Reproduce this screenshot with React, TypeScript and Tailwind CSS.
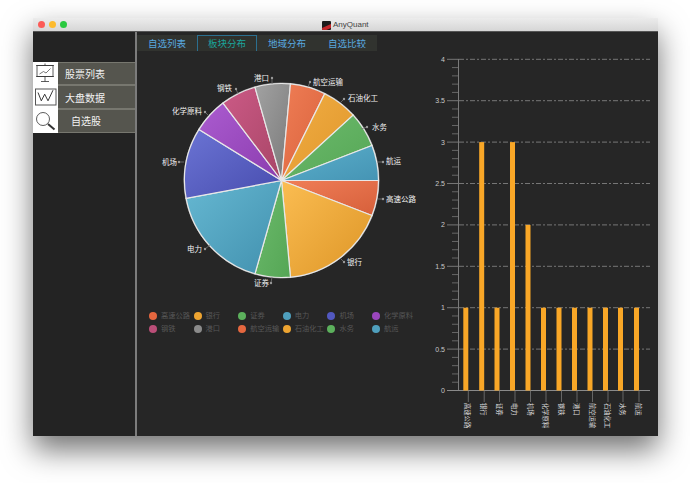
const font = { sans: "font-['Noto_Sans_CJK_SC','Noto_Sans',sans-serif]" };

const tabs = ['自选列表', '板块分布', '地域分布', '自选比较'];

// value is how many stocks fall in the sector; also used for the bars
const sectors = [
  { name: '高速公路', value: 1, from: '#f07e58', to: '#d65f3a', dot: '#e5673f', lx: 386, ly: 199, ax: 378, ay: 199, bx: 383, by: 199 },
  { name: '银行', value: 3, from: '#fbbd52', to: '#dd9526', dot: '#eda431', lx: 347, ly: 262, ax: 340, ay: 258, bx: 344, by: 262 },
  { name: '证券', value: 1, from: '#6dbb6d', to: '#55a655', dot: '#5cb05c', lx: 254, ly: 283, ax: 272, ay: 277, bx: 271, by: 283 },
  { name: '电力', value: 3, from: '#66b8d2', to: '#4190ae', dot: '#4f9fbd', lx: 187, ly: 249, ax: 210, ay: 245, bx: 205, by: 249 },
  { name: '机场', value: 2, from: '#6b74d4', to: '#474cae', dot: '#5258c0', lx: 162, ly: 162, ax: 184, ay: 162, bx: 179, by: 162 },
  { name: '化学原料', value: 1, from: '#ab5cd0', to: '#8b3cae', dot: '#9a46bc', lx: 172, ly: 111, ax: 209, ay: 116, bx: 205, by: 112 },
  { name: '钢铁', value: 1, from: '#cb5a86', to: '#a84566', dot: '#bb4e78', lx: 217, ly: 88, ax: 238, ay: 94, bx: 236, by: 89 },
  { name: '港口', value: 1, from: '#a2a2a2', to: '#797979', dot: '#8b8b8b', lx: 254, ly: 78, ax: 272, ay: 84, bx: 272, by: 78 },
  { name: '航空运输', value: 1, from: '#ef7d55', to: '#d9623c', dot: '#e5673f', lx: 313, ly: 82, ax: 308, ay: 87, bx: 310, by: 82 },
  { name: '石油化工', value: 1, from: '#f2ae45', to: '#df962a', dot: '#eda431', lx: 348, ly: 98, ax: 340, ay: 103, bx: 344, by: 99 },
  { name: '水务', value: 1, from: '#6dbb6d', to: '#55a655', dot: '#5cb05c', lx: 372, ly: 127, ax: 361, ay: 129, bx: 367, by: 127 },
  { name: '航运', value: 1, from: '#5cb0cc', to: '#4594b4', dot: '#4f9fbd', lx: 386, ly: 161, ax: 377, ay: 162, bx: 383, by: 162 },
];

const total = sectors.reduce((sum, s) => sum + s.value, 0);

function slicePath(cx: number, cy: number, r: number, start: number, end: number) {
  const x1 = cx + r * Math.cos(start);
  const y1 = cy + r * Math.sin(start);
  const x2 = cx + r * Math.cos(end);
  const y2 = cy + r * Math.sin(end);
  const large = end - start > Math.PI ? 1 : 0;
  return `M${cx} ${cy}L${x1} ${y1}A${r} ${r} 0 ${large} 1 ${x2} ${y2}Z`;
}

function PieChart() {
  let angle = 0;
  return (
    <svg width={292} height={250} viewBox="137 55 292 250" className="block">
      <defs>
        {sectors.map((s, i) => (
          <linearGradient key={s.name} id={`slice${i}`} x1="0" y1="0" x2="1" y2="1">
            <stop offset="0" stopColor={s.from} />
            <stop offset="1" stopColor={s.to} />
          </linearGradient>
        ))}
      </defs>
      <circle cx={281.5} cy={180.5} r={97.5} fill="none" stroke="#8a8a8a" strokeWidth={1} />
      {sectors.map((s, i) => {
        const start = angle;
        angle += (s.value / total) * Math.PI * 2;
        return (
          <path
            key={s.name}
            d={slicePath(281.5, 180.5, 97, start, angle)}
            fill={`url(#slice${i})`}
            stroke="#e8e8e8"
            strokeWidth={1.2}
          />
        );
      })}
      {sectors.map((s) => (
        <g key={s.name}>
          <line x1={s.ax} y1={s.ay} x2={s.bx} y2={s.by} stroke="#777" strokeWidth={0.8} />
          <circle cx={s.bx} cy={s.by} r={1.2} fill="#999" />
          <text x={s.lx} y={s.ly + 2.7} fontSize={7.5} fill="#f0f0f0" fontFamily="'Noto Sans CJK SC', sans-serif">
            {s.name}
          </text>
        </g>
      ))}
    </svg>
  );
}

function BarChart() {
  const y = (v: number) => 390.5 - v * 82.8;
  const majors = [0, 0.5, 1, 1.5, 2, 2.5, 3, 3.5, 4];
  const xs = [465.8, 481.7, 497, 512.5, 528, 543.5, 559, 574.5, 590, 605.5, 620.5, 636.5];
  return (
    <svg width={229} height={385} viewBox="429 51 229 385" className="block">
      {majors.map((m) => (
        <g key={m}>
          {m > 0 && (
            <line x1={459} y1={y(m)} x2={650} y2={y(m)} stroke="#8c8c8c" strokeWidth={0.8} strokeDasharray="5 2 2 2" />
          )}
          <line x1={447} y1={y(m)} x2={459} y2={y(m)} stroke="#8a8a8a" strokeWidth={0.8} />
          <text x={445} y={y(m) + 2.4} textAnchor="end" fontSize={7} fill="#c8c8c8" fontFamily="'Liberation Sans', sans-serif">
            {m}
          </text>
          {m < 4 &&
            [0.1, 0.2, 0.3, 0.4].map((t) => (
              <line key={t} x1={452} y1={y(m + t)} x2={458.5} y2={y(m + t)} stroke="#777" strokeWidth={0.8} />
            ))}
        </g>
      ))}
      <line x1={458.5} y1={59} x2={458.5} y2={390.5} stroke="#7a7a7a" strokeWidth={1} />
      <line x1={447} y1={390.5} x2={650} y2={390.5} stroke="#8a8a8a" strokeWidth={1} />
      {sectors.map((s, i) => (
        <g key={s.name}>
          <rect x={xs[i] - 2.5} y={y(s.value)} width={5} height={s.value * 82.8} fill="#f9a727" />
          <line x1={xs[i] + 2.5} y1={390.5} x2={xs[i] + 2.5} y2={402} stroke="#777" strokeWidth={0.8} />
          <text
            transform={`translate(${xs[i] - 0.4} 403) rotate(90)`}
            fontSize={6.3}
            fill="#dcdcdc"
            fontFamily="'Noto Sans CJK SC', sans-serif"
          >
            {s.name}
          </text>
        </g>
      ))}
    </svg>
  );
}

function BoardIcon() {
  return (
    <svg width={25} height={24} viewBox="0 0 25 24" fill="none" stroke="#333" strokeWidth={0.8}>
      <path d="M12 1.5v2M4 3.5h16v11h-16zM3 3.5h18M3 14.5h18M12 14.5v5M8 19.5h8" />
      <path d="M6.5 12l4-2.5 2.5 1.5 4.5-4.5" stroke="#555" />
    </svg>
  );
}

function LineIcon() {
  return (
    <svg width={25} height={24} viewBox="0 0 25 24" fill="none">
      <rect x={2.5} y={4} width={20.5} height={16} stroke="#555" strokeWidth={1} />
      <path d="M5 7.5l3.3 8.3 3.4-6.6 3.3 6.6 5-10.6" stroke="#222" strokeWidth={0.9} />
    </svg>
  );
}

function SearchIcon() {
  return (
    <svg width={25} height={24} viewBox="0 0 25 24" fill="none" stroke="#333">
      <circle cx={10} cy={10} r={6.5} strokeWidth={0.8} />
      <path d="M15 15l6.5 5.5" strokeWidth={2} />
    </svg>
  );
}

const menu = [
  { label: '股票列表', icon: <BoardIcon />, pad: 'pl-[7px]' },
  { label: '大盘数据', icon: <LineIcon />, pad: 'pl-[7px]' },
  { label: '自选股', icon: <SearchIcon />, pad: 'pl-[13px]' },
];

export default function App() {
  return (
    <div className={`w-[690px] h-[483px] bg-white overflow-hidden pl-[33px] pt-[18px] ${font.sans}`}>
      <div className="w-[625px] h-[418px] flex flex-col shadow-[0_14px_28px_rgba(0,0,0,0.55)]">
        {/* Title bar */}
        <div className="h-[14px] shrink-0 flex items-center relative bg-gradient-to-b from-[#ececec] to-[#d6d6d6] border-b border-[#555]">
          <div className="flex gap-1 pl-[4.5px]">
            <span className="w-[7px] h-[7px] rounded-full bg-[#fc5b57]" />
            <span className="w-[7px] h-[7px] rounded-full bg-[#fdbb2e]" />
            <span className="w-[7px] h-[7px] rounded-full bg-[#2ac940]" />
          </div>
          <div className="absolute left-[289px] top-[2px] flex items-center gap-[2px]">
            <span className="w-[9px] h-[9px] bg-[#1c1c1c] rounded-[1px] overflow-hidden flex items-end">
              <span className="block w-full h-[4px] bg-[#c4282c] -skew-y-[25deg]" />
            </span>
            <span className="text-[8px] leading-[10px] text-[#444] font-['Liberation_Sans',sans-serif]">AnyQuant</span>
          </div>
        </div>

        <div className="flex-1 flex min-h-0 bg-[#262626]">
          {/* Sidebar */}
          <div className="w-[102px] shrink-0 bg-[#232323] pt-[29.5px]">
            {menu.map((m) => (
              <div key={m.label} className="h-[23.7px] flex">
                <div className="w-[25px] bg-white">{m.icon}</div>
                <div className={`flex-1 flex items-center bg-[#55554e] border-y border-[#77776f] ${m.pad} text-[10px] text-[#f2f2f2]`}>
                  {m.label}
                </div>
              </div>
            ))}
          </div>
          <div className="w-[2px] shrink-0 bg-[#7c7c7c]" />

          {/* Main area */}
          <div className="flex-1 min-w-0">
            <div className="flex h-[19px] items-end">
              {tabs.map((t, i) => (
                <div
                  key={t}
                  className={
                    i === 1
                      ? 'w-[60px] h-[16px] flex items-center justify-center text-[9.5px] bg-[#2f312d] text-[#1ba59c] border border-b-0 border-[#2b6f8f]'
                      : 'w-[60px] h-[16px] flex items-center justify-center text-[9.5px] bg-[#31332f] text-[#58a9e0]'
                  }
                >
                  {t}
                </div>
              ))}
            </div>
            <div className="flex">
              <div className="w-[292px] shrink-0">
                <div className="h-[4px]" />
                <PieChart />
                <div className="grid grid-cols-[repeat(6,44.6px)] gap-y-[4px] pl-[12px] pt-[6px]">
                  {sectors.map((s) => (
                    <div key={s.name} className="flex items-center gap-[4px] h-[9px] whitespace-nowrap">
                      <span className="w-[8px] h-[8px] rounded-full shrink-0" style={{ backgroundColor: s.dot }} />
                      <span className="text-[7.25px] leading-[9px] text-[#575757]">{s.name}</span>
                    </div>
                  ))}
                </div>
              </div>
              <BarChart />
            </div>
          </div>
        </div>
      </div>
    </div>
  );
}
